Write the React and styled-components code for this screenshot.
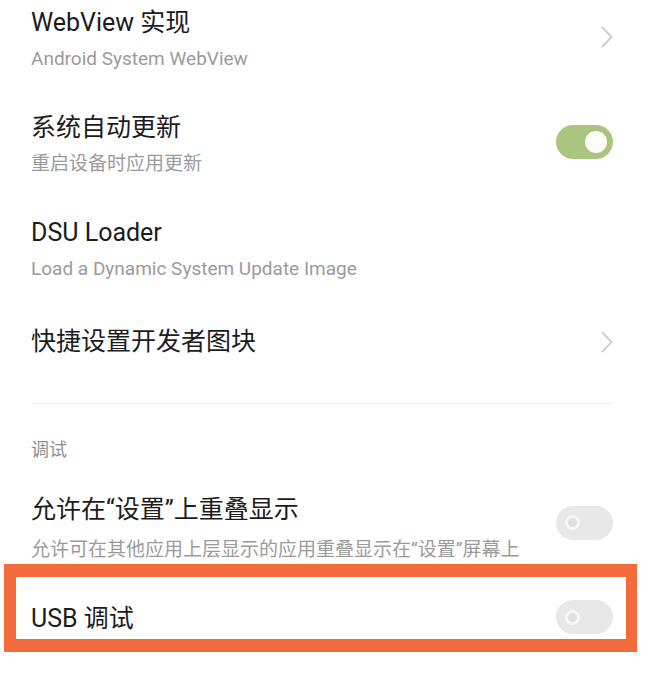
import React from "react";
import styled, { createGlobalStyle } from "styled-components";

const GlobalStyle = createGlobalStyle`
  html, body {
    margin: 0;
    padding: 0;
    background: #ffffff;
  }
  body {
    font-family: Roboto, "Noto Sans CJK SC", sans-serif;
    -webkit-font-smoothing: antialiased;
    overflow: hidden;
  }
`;

const Screen = styled.div`
  width: 652px;
  height: 678px;
  overflow: hidden;
  background: #ffffff;
`;

/* the settings list is scrolled a little, so the first row starts above the top edge */
const List = styled.div`
  display: flex;
  flex-direction: column;
  margin-top: -15px;
  padding: 0 39px 0 31px;
`;

const Row = styled.div`
  position: relative;
  display: flex;
  align-items: center;
  justify-content: space-between;
  gap: 24px;
  padding: ${(p) => p.$top ?? 18}px 0 ${(p) => p.$bottom ?? 19}px;
`;

const TextBlock = styled.div`
  display: flex;
  flex-direction: column;
  min-width: 0;
`;

const Title = styled.div`
  font-size: 25px;
  line-height: 40px;
  color: #1c1c1c;
  white-space: nowrap;
`;

const Summary = styled.div`
  margin-top: ${(p) => p.$gap ?? 4}px;
  font-size: 19px;
  line-height: 24px;
  color: #9b9b9b;
  white-space: nowrap;
`;

const Divider = styled.div`
  margin-top: 19px;
  height: 1px;
  background: #f0f0f0;
`;

const SectionHeader = styled.div`
  padding: 34px 0 10px;
  font-size: 18px;
  line-height: 24px;
  color: #8f8f8f;
`;

const Switch = styled.span`
  flex: none;
  display: flex;
  align-items: center;
  justify-content: ${(p) => (p.$on ? "flex-end" : "flex-start")};
  box-sizing: border-box;
  width: 57px;
  height: 34px;
  margin-bottom: ${(p) => p.$raise ?? 0}px;
  padding: ${(p) => (p.$on ? "0 6px" : "0 9px")};
  border-radius: 17px;
  background: ${(p) => (p.$on ? "#a9c57f" : "#e8e8e8")};
`;

const Knob = styled.span`
  box-sizing: border-box;
  width: ${(p) => (p.$on ? 22 : 15)}px;
  height: ${(p) => (p.$on ? 22 : 15)}px;
  border-radius: 50%;
  background: ${(p) => (p.$on ? "#fbfdf6" : "#e0e0e0")};
  border: ${(p) => (p.$on ? "none" : "3px solid #f7f7f7")};
`;

const Chevron = styled.svg`
  flex: none;
  width: 12px;
  height: 22px;
`;

/* orange annotation frame drawn on top of the USB debugging row */
const Highlight = styled.div`
  position: absolute;
  top: -10px;
  left: -27px;
  right: -24px;
  height: 88px;
  box-sizing: border-box;
  border-style: solid;
  border-color: #f36b3b;
  border-width: 13px 11px 13px 12px;
  pointer-events: none;
`;

const Arrow = () => (
  <Chevron viewBox="0 0 12 22">
    <polyline
      points="1.5,1.5 10.5,11 1.5,20.5"
      fill="none"
      stroke="#c6c6c6"
      strokeWidth="1.8"
      strokeLinecap="round"
      strokeLinejoin="round"
    />
  </Chevron>
);

const Toggle = ({ on, raise }) => (
  <Switch $on={on} $raise={raise}>
    <Knob $on={on} />
  </Switch>
);

export default function App() {
  return (
    <Screen>
      <GlobalStyle />
      <List>
        <Row>
          <TextBlock>
            <Title>WebView 实现</Title>
            <Summary>Android System WebView</Summary>
          </TextBlock>
          <Arrow />
        </Row>

        <Row>
          <TextBlock>
            <Title>系统自动更新</Title>
            <Summary>重启设备时应用更新</Summary>
          </TextBlock>
          <Toggle on />
        </Row>

        <Row>
          <TextBlock>
            <Title>DSU Loader</Title>
            <Summary>Load a Dynamic System Update Image</Summary>
          </TextBlock>
        </Row>

        <Row $top={22} $bottom={22}>
          <TextBlock>
            <Title>快捷设置开发者图块</Title>
          </TextBlock>
          <Arrow />
        </Row>

        <Divider />
        <SectionHeader>调试</SectionHeader>

        <Row $bottom={12}>
          <TextBlock>
            <Title>允许在“设置”上重叠显示</Title>
            <Summary $gap={8}>允许可在其他应用上层显示的应用重叠显示在“设置”屏幕上</Summary>
          </TextBlock>
          <Toggle on={false} raise={7} />
        </Row>

        <Row $top={25} $bottom={19}>
          <TextBlock>
            <Title>USB 调试</Title>
          </TextBlock>
          <Toggle on={false} raise={4} />
          <Highlight />
        </Row>
      </List>
    </Screen>
  );
}
